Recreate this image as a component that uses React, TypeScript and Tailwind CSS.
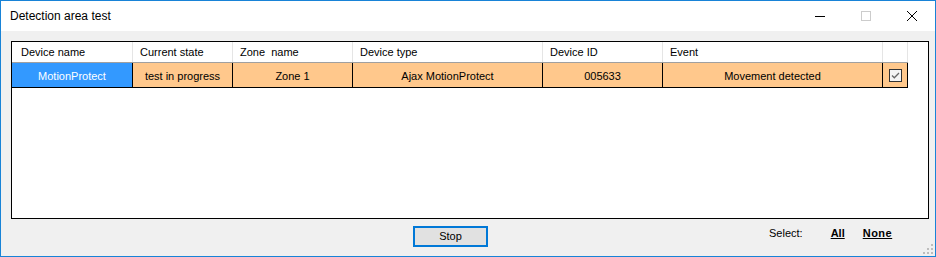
import React from 'react';

interface Column {
  title: string;
  width: string;
  value: string;
}

const columns: Column[] = [
  { title: 'Device name', width: 'w-[121px]', value: 'MotionProtect' },
  { title: 'Current state', width: 'w-[100px]', value: 'test in progress' },
  { title: 'Zone  name', width: 'w-[120px]', value: 'Zone 1' },
  { title: 'Device type', width: 'w-[190px]', value: 'Ajax MotionProtect' },
  { title: 'Device ID', width: 'w-[120px]', value: '005633' },
  { title: 'Event', width: 'w-[220px]', value: 'Movement detected' },
];

const TitleBar: React.FC = () => (
  <div className="h-[30px] bg-white flex items-center shrink-0">
    <span className="pl-[9px] text-[12px] text-black">Detection area test</span>
    <div className="ml-auto flex h-full">
      <div className="w-[46px] h-full flex items-center justify-center">
        <div className="w-[10px] h-px bg-black" />
      </div>
      <div className="w-[46px] h-full flex items-center justify-center">
        <div className="w-[10px] h-[10px] border border-[#cccccc]" />
      </div>
      <div className="w-[46px] h-full flex items-center justify-center">
        <svg width="10" height="10" viewBox="0 0 10 10">
          <path d="M0 0 L10 10 M10 0 L0 10" stroke="#000" strokeWidth="1" />
        </svg>
      </div>
    </div>
  </div>
);

const CheckCell: React.FC = () => (
  <div className="w-[25px] h-full flex items-center justify-center border-r border-black">
    <svg width="13" height="13" viewBox="0 0 13 13">
      <rect x="0.5" y="0.5" width="12" height="12" fill="#f4f4f4" stroke="#333333" />
      <path d="M3 6.5 L5.3 8.8 L10 4" fill="none" stroke="#666666" strokeWidth="1.3" />
    </svg>
  </div>
);

const Grid: React.FC = () => (
  <div className="mt-[10px] ml-[10px] mr-[6px] h-[178px] border border-black bg-white text-[11px] text-black">
    {/* header */}
    <div className="flex h-[21px] w-[896px] border-b border-[#a0a0a0]">
      {columns.map((c, i) => (
        <div
          key={c.title}
          className={`${c.width} h-full flex items-center pt-[1px] whitespace-pre border-r border-[#e5e5e5] ${i === 0 ? 'pl-[9px]' : 'pl-[7px]'}`}
        >
          {c.title}
        </div>
      ))}
      <div className="w-[25px] h-full border-r border-[#e5e5e5]" />
    </div>
    {/* data row */}
    <div className="flex h-[25px] w-[896px] border-b border-black">
      {columns.map((c, i) => (
        <div
          key={c.title}
          className={`${c.width} h-full flex items-center justify-center pt-[2px] border-r border-black ${
            i === 0 ? 'bg-[#3399ff] text-white' : 'bg-[#ffc88c]'
          }`}
        >
          {c.value}
        </div>
      ))}
      <div className="bg-[#ffc88c] h-full">
        <CheckCell />
      </div>
    </div>
  </div>
);

const App: React.FC = () => {
  return (
    <div className="w-[936px] h-[257px] border border-[#1883d7] bg-[#f0f0f0] flex flex-col relative font-['Liberation_Sans',Arial,sans-serif]">
      <TitleBar />
      <Grid />
      <div className="flex items-start pt-[7px] text-[11px] text-black">
        <button className="ml-[412px] w-[75px] h-[21px] border-2 border-[#0078d7] bg-[#e1e1e1] flex items-center justify-center leading-none">
          Stop
        </button>
        <span className="ml-[281px] mt-[1px] leading-[13px]">Select:</span>
        <span className="ml-[28px] mt-[1px] leading-[13px] font-bold underline">All</span>
        <span className="ml-[18px] mt-[1px] leading-[13px] font-bold underline tracking-[0.5px]">None</span>
      </div>
      <svg className="absolute right-[1px] bottom-[1px]" width="11" height="11" viewBox="0 0 11 11">
        <rect x="8" y="0" width="2" height="2" fill="#bdbdbd" />
        <rect x="4" y="4" width="2" height="2" fill="#bdbdbd" />
        <rect x="8" y="4" width="2" height="2" fill="#bdbdbd" />
        <rect x="0" y="8" width="2" height="2" fill="#bdbdbd" />
        <rect x="4" y="8" width="2" height="2" fill="#bdbdbd" />
        <rect x="8" y="8" width="2" height="2" fill="#bdbdbd" />
      </svg>
    </div>
  );
};

export default App;
